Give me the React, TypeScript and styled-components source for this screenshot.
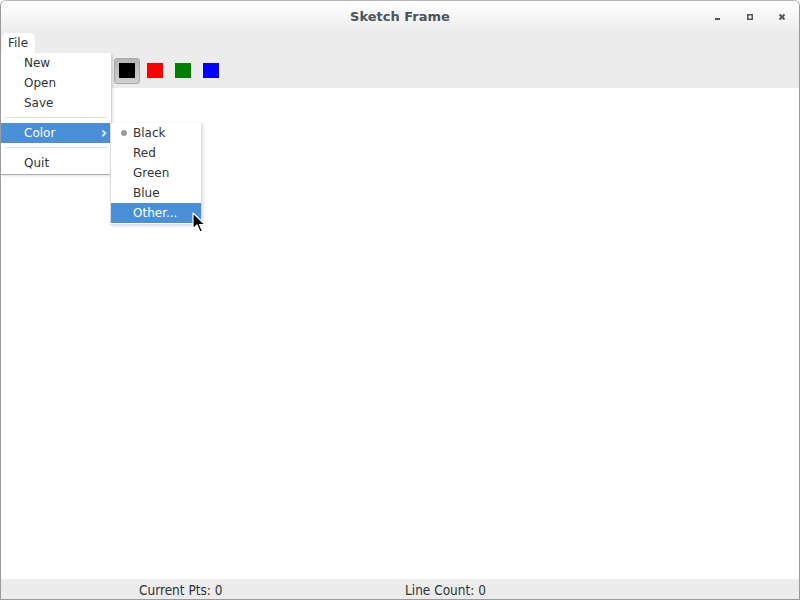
import styled, { createGlobalStyle } from "styled-components"

const GlobalStyle = createGlobalStyle`
  html, body {
    margin: 0;
    padding: 0;
    background: #ffffff;
  }
  body {
    font-family: "DejaVu Sans", "Liberation Sans", sans-serif;
  }
`

const fileItems = [
  { label: 'New' },
  { label: 'Open' },
  { label: 'Save' },
  { sep: true },
  { label: 'Color', sub: true, active: true },
  { sep: true },
  { label: 'Quit' },
]

const colorItems = [
  { label: 'Black', checked: true },
  { label: 'Red' },
  { label: 'Green' },
  { label: 'Blue' },
  { label: 'Other...', active: true },
]

const swatches = ['#000000', '#ff0000', '#008000', '#0000ff']

export default function App () {
  return (
    <>
      <GlobalStyle />
      <Window>
        <TitleBar>
          <Title>Sketch Frame</Title>
          <WindowButtons>
            <WinButton>
              <svg width='8' height='8' viewBox='0 0 8 8'><rect x='1' y='5' width='5' height='2' fill='#4a5459' /></svg>
            </WinButton>
            <WinButton>
              <svg width='8' height='8' viewBox='0 0 8 8'><rect x='1.75' y='1.75' width='4.5' height='4.5' fill='none' stroke='#4a5459' strokeWidth='1.5' /></svg>
            </WinButton>
            <WinButton>
              <svg width='8' height='8' viewBox='0 0 8 8'><path d='M1.5 1.5 L6.5 6.5 M6.5 1.5 L1.5 6.5' stroke='#4a5459' strokeWidth='1.8' /></svg>
            </WinButton>
          </WindowButtons>
        </TitleBar>
        <MenuBar>
          <MenuTitle open>File</MenuTitle>
        </MenuBar>
        <ToolBar>
          {swatches.map((c, idx) => (
            <SwatchButton key={c} selected={idx === 0}>
              <Swatch color={c} />
            </SwatchButton>
          ))}
        </ToolBar>
        <Canvas />
        <StatusBar>
          <StatusText>Current Pts: 0</StatusText>
          <StatusText>Line Count: 0</StatusText>
        </StatusBar>

        <FileMenu>
          {fileItems.map((item, idx) => item.sep
            ? <Separator key={idx} />
            : (
              <MenuItem key={idx} active={item.active}>
                <span>{item.label}</span>
                {item.sub && <Chevron>›</Chevron>}
              </MenuItem>
            ))}
        </FileMenu>
        <ColorMenu>
          {colorItems.map(item => (
            <MenuItem key={item.label} active={item.active} indent={22}>
              {item.checked && <Bullet />}
              <span>{item.label}</span>
            </MenuItem>
          ))}
        </ColorMenu>
        <Pointer width='14' height='22' viewBox='0 0 14 22'>
          <path d='M1 1 L1 17 L5 13 L8 20 L10.5 19 L7.5 12.5 L13 12.5 Z' fill='#000' stroke='#fff' strokeWidth='1.2' strokeLinejoin='round' />
        </Pointer>
      </Window>
    </>
  )
}

const Window = styled.div`
  position: relative;
  width: 800px;
  height: 600px;
  box-sizing: border-box;
  border: 1px solid #9a9a9a;
  border-top-color: #b8b8b8;
  border-radius: 6px 6px 0 0;
  display: flex;
  flex-direction: column;
  overflow: hidden;
  background: #ececec;
`
const TitleBar = styled.div`
  height: 32px;
  flex: none;
  display: flex;
  align-items: center;
  justify-content: center;
  position: relative;
  background: linear-gradient(#ffffff, #ececec);
`
const Title = styled.div`
  font-weight: bold;
  font-size: 13px;
  color: #4a5459;
  margin-bottom: 1px;
`
const WindowButtons = styled.div`
  position: absolute;
  right: 13px;
  top: 12px;
  display: flex;
  gap: 24px;
`
const WinButton = styled.div`
  width: 8px;
  height: 8px;
  display: flex;
`
const MenuBar = styled.div`
  height: 20px;
  flex: none;
  display: flex;
  padding-left: 1px;
  background: #ececec;
`
const MenuTitle = styled.div<{ open?: boolean }>`
  font-size: 12px;
  color: #2e3436;
  padding: 3px 7px 0 6px;
  border-radius: 5px 5px 0 0;
  background: ${p => p.open ? '#ffffff' : 'transparent'};
`
const ToolBar = styled.div`
  height: 35px;
  flex: none;
  display: flex;
  align-items: center;
  gap: 2px;
  padding-left: 113px;
  background: #ececec;
`
const SwatchButton = styled.div<{ selected?: boolean }>`
  width: 26px;
  height: 26px;
  box-sizing: border-box;
  display: flex;
  align-items: center;
  justify-content: center;
  border-radius: 3px;
  border: 1px solid ${p => p.selected ? '#a8a8a8' : 'transparent'};
  background: ${p => p.selected ? 'linear-gradient(#b4b4b4, #cfcfcf)' : 'transparent'};
`
const Swatch = styled.div<{ color: string }>`
  width: 16px;
  height: 15px;
  background: ${p => p.color};
`
const Canvas = styled.div`
  flex: 1;
  background: #ffffff;
`
const StatusBar = styled.div`
  height: 20px;
  flex: none;
  display: grid;
  grid-template-columns: 266px 266px 266px;
  background: #ececec;
`
const StatusText = styled.div`
  font-family: "DejaVu Sans Condensed", "DejaVu Sans", sans-serif;
  font-size: 13.5px;
  color: #2e3436;
  padding: 1px 0 0 138px;
  line-height: 20px;
  white-space: nowrap;
`
const FileMenu = styled.div`
  position: absolute;
  left: 0;
  top: 52px;
  width: 110px;
  padding-bottom: 1px;
  background: #ffffff;
  border-right: 1px solid #d6d6d6;
  border-bottom: 1px solid #b0b0b0;
  box-shadow: 1px 1px 2px rgba(0, 0, 0, 0.12);
  display: flex;
  flex-direction: column;
`
const ColorMenu = styled.div`
  position: absolute;
  left: 109px;
  top: 122px;
  width: 90px;
  padding-bottom: 1px;
  background: #ffffff;
  border: 1px solid #dcdcdc;
  border-top: none;
  box-shadow: 1px 1px 3px rgba(0, 0, 0, 0.15);
  display: flex;
  flex-direction: column;
`
const MenuItem = styled.div<{ active?: boolean, indent?: number }>`
  position: relative;
  height: 20px;
  display: flex;
  align-items: center;
  justify-content: space-between;
  padding: 0 4px 0 ${p => p.indent ?? 23}px;
  font-size: 12px;
  color: ${p => p.active ? '#ffffff' : '#2e3436'};
  background: ${p => p.active ? '#4a90d9' : 'transparent'};
`
const Chevron = styled.span`
  font-size: 15px;
  font-weight: bold;
  line-height: 1;
`
const Bullet = styled.span`
  position: absolute;
  left: 10px;
  top: 7px;
  width: 6px;
  height: 6px;
  border-radius: 50%;
  background: #9a9a9a;
`
const Separator = styled.div`
  height: 10px;
  margin: 0 4px 0 5px;
  background: linear-gradient(transparent 4px, #e0e0e0 4px, #e0e0e0 5px, transparent 5px);
`
const Pointer = styled.svg`
  position: absolute;
  left: 191px;
  top: 211px;
`
